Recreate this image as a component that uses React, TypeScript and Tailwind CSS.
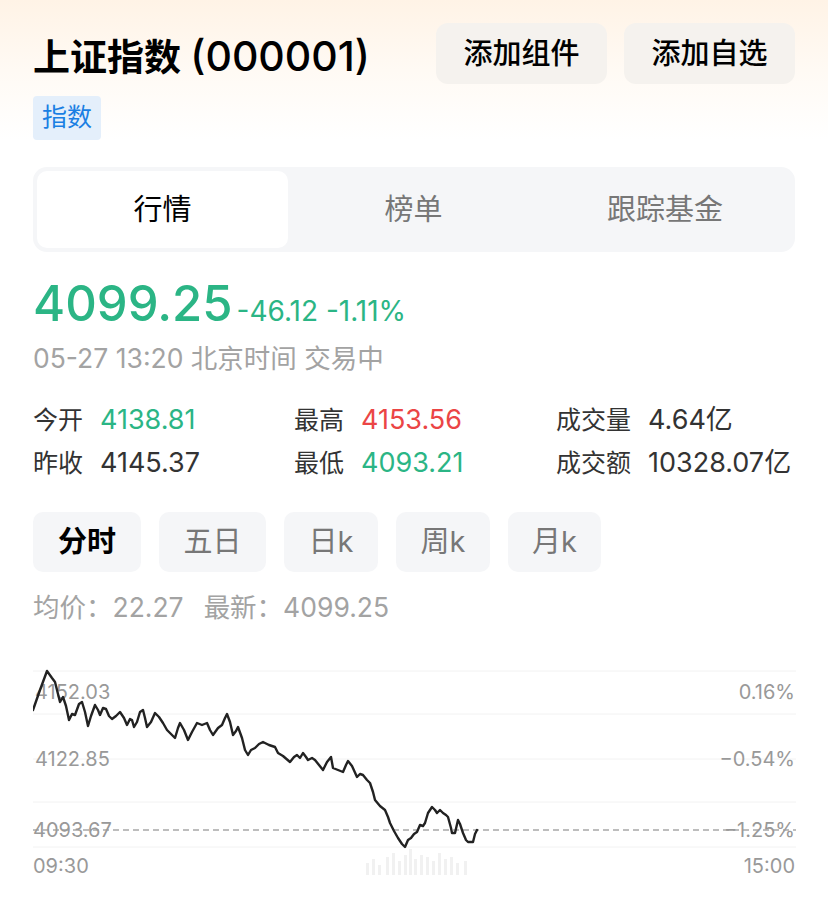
import React from 'react';

const FONT = 'font-[Inter,"Noto_Sans_CJK_SC",sans-serif]';

// chart line, traced in page coordinates
const LINE: [number, number][] = [
    [33, 710], [40, 690], [47, 671], [52, 678], [55, 682], [60, 702], [63, 697], [66, 706], [69, 720],
    [72, 714], [75, 715], [79, 704], [82, 702], [85, 712], [88, 726], [91, 716], [95, 705], [98, 710],
    [100, 715], [103, 708], [106, 709], [109, 716], [112, 719], [116, 716], [120, 712], [124, 718],
    [127, 725], [130, 719], [132, 720], [134, 727], [137, 722], [140, 712], [143, 710], [145, 718],
    [147, 727], [151, 722], [155, 713], [159, 717], [163, 723], [167, 730], [171, 734], [175, 738],
    [178, 728], [180, 723], [184, 730], [188, 740], [192, 732], [197, 723], [202, 725], [207, 723],
    [210, 730], [213, 735], [218, 728], [222, 725], [225, 718], [227, 714], [230, 722], [233, 735],
    [236, 731], [238, 727], [242, 738], [245, 750], [248, 755], [251, 750], [255, 748], [259, 744],
    [263, 742], [269, 745], [275, 747], [278, 753], [283, 756], [290, 762], [294, 757], [297, 755],
    [300, 758], [303, 753], [306, 757], [308, 760], [312, 758], [315, 760], [319, 765], [323, 770],
    [327, 762], [331, 757], [333, 768], [338, 770], [343, 772], [346, 765], [348, 761], [352, 766],
    [357, 777], [360, 774], [363, 775], [367, 780], [370, 783], [373, 792], [375, 800], [380, 806],
    [385, 810], [388, 817], [390, 823], [394, 831], [398, 838], [402, 844], [405, 847], [408, 840],
    [411, 838], [414, 834], [417, 832], [420, 825], [423, 826], [425, 823], [428, 813], [432, 807],
    [435, 810], [437, 813], [440, 810], [443, 813], [446, 815], [448, 817], [451, 828], [452, 833],
    [455, 833], [458, 820], [460, 824], [463, 833], [466, 840], [468, 842], [473, 842], [475, 834],
    [477, 830],
];

const VOLUME: [number, number][] = [
    [366, 12], [372, 16], [378, 10], [386, 18], [392, 22], [398, 14], [404, 20], [409, 26],
    [414, 16], [420, 20], [426, 18], [432, 14], [438, 22], [444, 16], [450, 18], [456, 12], [464, 14],
];

const Chart: React.FC = () => {
    const pts = LINE.map(([x, y]) => `${x - 33},${y - 660}`).join(' ');
    const grid = [11, 54, 99, 142, 187];
    return (
        <svg width="763" height="230" viewBox="0 0 763 230" className="block">
            {grid.map(y => (
                <line key={y} x1="0" x2="763" y1={y} y2={y} stroke="#f2f2f2" strokeWidth="1" />
            ))}
            <line x1="0" x2="763" y1="170" y2="170" stroke="#a8a8a8" strokeWidth="1.5" strokeDasharray="6 4" />
            {VOLUME.map(([x, h], i) => (
                <rect key={i} x={x - 33} y={215 - h} width="3" height={h} fill="#e4e4e4" opacity={0.5} />
            ))}
            <g fill="#999999" fontSize="20" fontFamily='Inter, "Noto Sans CJK SC", sans-serif'>
                <text x="2" y="39">4152.03</text>
                <text x="2" y="106">4122.85</text>
                <text x="0" y="177">4093.67</text>
                <text x="762" y="39" textAnchor="end">0.16%</text>
                <text x="762" y="106" textAnchor="end">−0.54%</text>
                <text x="762" y="177" textAnchor="end">−1.25%</text>
                <text x="0" y="213">09:30</text>
                <text x="762" y="213" textAnchor="end">15:00</text>
            </g>
            <polyline points={pts} fill="none" stroke="#222222" strokeWidth="2.4" strokeLinejoin="round" strokeLinecap="round" />
        </svg>
    );
};

const Stat: React.FC<{ label: string; value: string; color: string }> = ({ label, value, color }) => (
    <div className="flex items-center gap-[17px]">
        <span className="text-[25px] text-[#333333]">{label}</span>
        <span className={`text-[27px] ${color}`}>{value}</span>
    </div>
);

const periods = [
    { label: '分时', w: 'w-[108px]' },
    { label: '五日', w: 'w-[107px]' },
    { label: '日k', w: 'w-[94px]' },
    { label: '周k', w: 'w-[94px]' },
    { label: '月k', w: 'w-[93px]' },
];

export default function App() {
    return (
        <div className={`w-[828px] min-h-[905px] bg-white ${FONT}`}>
            <div className="bg-linear-to-b from-[#fff3e6] via-[#fffaf4] to-white px-[33px] pt-[23px]">
                <div className="flex items-center justify-between">
                    <h1 className="mt-[6px] text-[37px] font-semibold leading-none text-black">
                        上证指数 <span className="text-[41px] font-medium">(000001)</span>
                    </h1>
                    <div className="flex gap-[17px]">
                        <button className="h-[61px] w-[171px] rounded-[12px] bg-[#f5f2ee] text-[29px] font-medium text-black">添加组件</button>
                        <button className="h-[61px] w-[171px] rounded-[12px] bg-[#f5f2ee] text-[29px] font-medium text-black">添加自选</button>
                    </div>
                </div>
                <div className="mt-[12px] inline-flex h-[44px] items-center rounded-[4px] bg-[#e4effb] px-[9px] text-[25px] text-[#1b7fe3]">指数</div>
            </div>

            <div className="px-[33px]">
                <div className="mt-[27px] flex h-[85px] rounded-[14px] bg-[#f5f6f8] p-[4px]">
                    <div className="flex w-[251px] items-center justify-center rounded-[10px] bg-white text-[29px] text-black">行情</div>
                    <div className="flex w-[251px] items-center justify-center text-[29px] text-[#777777]">榜单</div>
                    <div className="flex flex-1 items-center justify-center text-[29px] text-[#777777]">跟踪基金</div>
                </div>

                <div className="mt-[24px] flex items-baseline gap-[4px] text-[#2bb585]">
                    <span className="text-[49px] font-medium leading-[56px]">4099.25</span>
                    <span className="text-[28px]">-46.12 -1.11%</span>
                </div>
                <div className="mt-[10px] text-[26.5px] leading-[32px] text-[#a3a3a3]">05-27 13:20 北京时间 交易中</div>

                <div className="mt-[30px] grid grid-cols-[261px_262px_1fr] gap-y-[11px] leading-[32px]">
                    <Stat label="今开" value="4138.81" color="text-[#2bb585]" />
                    <Stat label="最高" value="4153.56" color="text-[#eb4545]" />
                    <Stat label="成交量" value="4.64亿" color="text-[#333333]" />
                    <Stat label="昨收" value="4145.37" color="text-[#333333]" />
                    <Stat label="最低" value="4093.21" color="text-[#2bb585]" />
                    <Stat label="成交额" value="10328.07亿" color="text-[#333333]" />
                </div>

                <div className="mt-[33px] flex gap-[18px]">
                    {periods.map((p, i) => (
                        <div
                            key={p.label}
                            className={`flex h-[60px] ${p.w} items-center justify-center rounded-[10px] bg-[#f5f6f8] text-[29px] ${
                                i === 0 ? 'font-semibold text-black' : 'text-[#777777]'
                            }`}
                        >
                            {p.label}
                        </div>
                    ))}
                </div>

                <div className="mt-[19px] flex gap-[20px] text-[26.5px] leading-[32px] text-[#a3a3a3]">
                    <span>均价：22.27</span>
                    <span>最新：4099.25</span>
                </div>

                <div className="mt-[37px]">
                    <Chart />
                </div>
            </div>
        </div>
    );
}
